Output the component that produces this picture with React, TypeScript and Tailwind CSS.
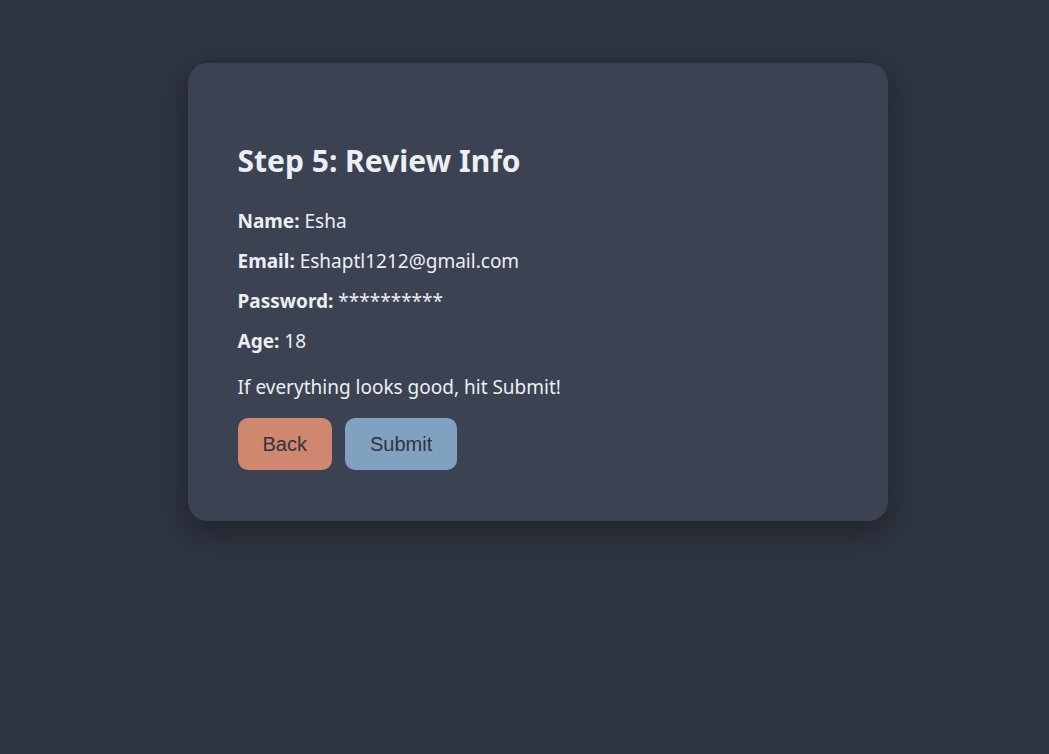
const App = () => {
  const rows = [
    { label: "Name:", value: "Esha" },
    { label: "Email:", value: "Eshaptl1212@gmail.com" },
    { label: "Password:", value: "**********" },
    { label: "Age:", value: "18" },
  ];

  return (
    <div className="min-h-screen bg-[#2e3440] flex justify-center pt-[63px] pl-[26px] font-['Noto_Sans',sans-serif]">
      <div className="w-[700px] h-[458px] rounded-[20px] bg-[#3b4252] px-[50px] pt-[78px] shadow-[0_10px_30px_rgba(0,0,0,0.35)] text-[#eceff4]">
        {/* Titel */}
        <h2 className="text-[30px] leading-[40px] font-bold">Step 5: Review Info</h2>

        {/* Gegevens */}
        <div className="mt-[28px] flex flex-col gap-[16px]">
          {rows.map((row) => (
            <p key={row.label} className="text-[19px] leading-[24px]">
              <strong className="font-bold">{row.label}</strong> {row.value}
            </p>
          ))}
        </div>

        <p className="mt-[22px] text-[19px] leading-[24px]">If everything looks good, hit Submit!</p>

        {/* Knoppen */}
        <div className="mt-[19px] flex gap-[13px]">
          <button className="h-[52px] px-[25px] rounded-[10px] bg-[#d08770] text-[#2e3440] text-[20px] font-['Liberation_Sans',Arial,sans-serif]">
            Back
          </button>
          <button className="h-[52px] px-[25px] rounded-[10px] bg-[#81a1c1] text-[#2e3440] text-[20px] font-['Liberation_Sans',Arial,sans-serif]">
            Submit
          </button>
        </div>
      </div>
    </div>
  );
};

export default App;
